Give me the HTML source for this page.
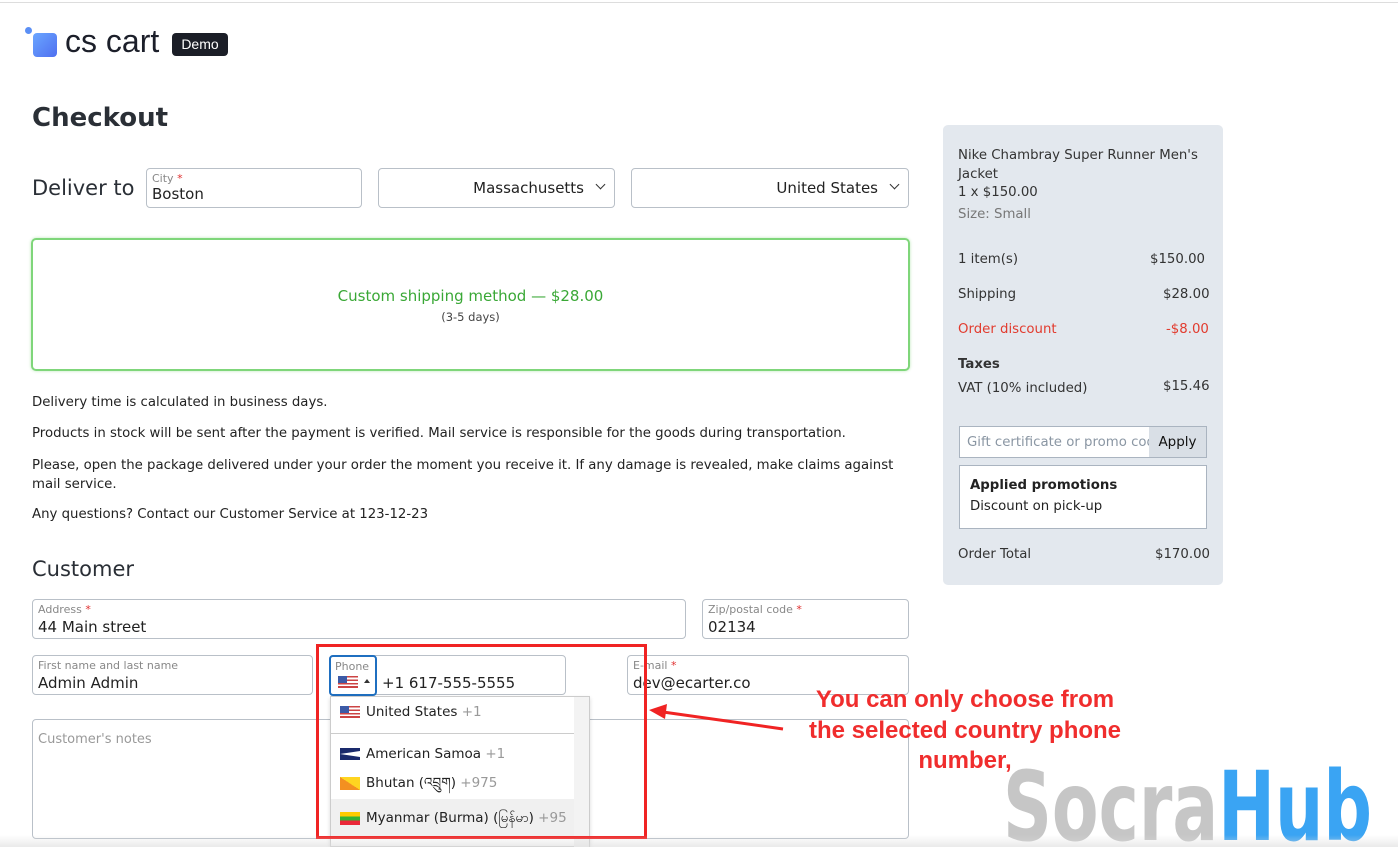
<!DOCTYPE html>
<html><head><meta charset="utf-8"><style>
*{box-sizing:border-box;margin:0;padding:0}
body{width:1398px;height:847px;overflow:hidden;background:#fff;position:relative;font-family:"DejaVu Sans","Liberation Sans",sans-serif;color:#222;font-size:13px}
.a{position:absolute}
.inp{position:absolute;border:1px solid #b9c0c8;border-radius:4px;background:#fff}
.lab{position:absolute;left:5px;top:3px;font-size:11px;color:#888}
.lab b{color:#e03030;font-weight:normal}
.val{position:absolute;left:5px;top:18px;font-size:15px;color:#222}
.sel{position:absolute;right:30px;top:10px;font-size:15px;color:#222}
.chev{position:absolute;right:10px;top:12px;width:7px;height:7px;border-right:1.5px solid #333;border-bottom:1.5px solid #333;transform:rotate(45deg)}
.p{position:absolute;left:32px;font-size:13.3px;color:#222}
.sb{font-size:13.3px;color:#333;position:absolute}
.dd{position:absolute;left:366px;font-size:13.5px;line-height:18px;height:18px;white-space:nowrap}
</style></head><body>
<div class="a" style="left:0;top:2px;width:1398px;height:1px;background:#ddd"></div>
<div class="a" style="left:25px;top:27px;width:7px;height:7px;border-radius:50%;background:#5b8ff5"></div>
<div class="a" style="left:33px;top:33px;width:24px;height:24px;border-radius:4px;background:linear-gradient(135deg,#6aa6ff,#4f6ff0)"></div>
<div class="a" style="left:65px;top:23px;font-family:'Liberation Sans',sans-serif;font-size:32px;color:#1c1f2a">cs cart</div>
<div class="a" style="left:172px;top:33px;width:56px;height:23px;background:#1b1e27;border-radius:4px;color:#fff;font-family:'Liberation Sans',sans-serif;font-size:14px;text-align:center;line-height:23px">Demo</div>

<div class="a" style="left:32px;top:103px;font-size:26px;font-weight:bold;color:#2a2f36">Checkout</div>
<div class="a" style="left:32px;top:176px;font-size:21px;color:#2a2f36">Deliver to</div>
<div class="inp" style="left:146px;top:168px;width:216px;height:40px"><div class="lab">City <b>*</b></div><div class="val" style="top:16px">Boston</div></div>
<div class="inp" style="left:378px;top:168px;width:237px;height:40px"><div class="sel">Massachusetts</div><div class="chev"></div></div>
<div class="inp" style="left:631px;top:168px;width:278px;height:40px"><div class="sel">United States</div><div class="chev"></div></div>

<div class="a" style="left:31px;top:238px;width:879px;height:133px;border:2px solid #7fd67a;border-radius:5px;box-shadow:0 0 3px #bfe9bc"></div>
<div class="a" style="left:31px;top:287px;width:879px;text-align:center;color:#3aa836;font-size:15px">Custom shipping method — $28.00</div>
<div class="a" style="left:31px;top:310px;width:879px;text-align:center;color:#444;font-size:11.5px">(3-5 days)</div>

<div class="p" style="top:395px">Delivery time is calculated in business days.</div>
<div class="p" style="top:426px">Products in stock will be sent after the payment is verified. Mail service is responsible for the goods during transportation.</div>
<div class="p" style="top:456px;width:880px;line-height:19px">Please, open the package delivered under your order the moment you receive it. If any damage is revealed, make claims against mail service.</div>
<div class="p" style="top:507px">Any questions? Contact our Customer Service at 123-12-23</div>

<div class="a" style="left:32px;top:557px;font-size:21px;color:#2a2f36">Customer</div>
<div class="inp" style="left:32px;top:599px;width:654px;height:40px"><div class="lab">Address <b>*</b></div><div class="val">44 Main street</div></div>
<div class="inp" style="left:702px;top:599px;width:207px;height:40px"><div class="lab">Zip/postal code <b>*</b></div><div class="val">02134</div></div>
<div class="inp" style="left:32px;top:655px;width:281px;height:40px"><div class="lab">First name and last name</div><div class="val">Admin Admin</div></div>
<div class="inp" style="left:329px;top:655px;width:237px;height:40px"><div class="lab">Phone</div><div class="val" style="left:52px">+1 617-555-5555</div></div>
<div class="a" style="left:329px;top:655px;width:48px;height:41px;border:2px solid #1f6fc0;border-radius:4px"></div>
<div class="a" style="left:335px;top:660px;font-size:11px;color:#888;background:#fff">Phone</div>
<div class="a" style="left:338px;top:676px;width:20px;height:12px;background:repeating-linear-gradient(#c44 0 1.7px,#fff 1.7px 3.4px)"><div style="width:9px;height:7px;background:#3c5aa6"></div></div>
<div class="a" style="left:364px;top:679px;border-left:3px solid transparent;border-right:3px solid transparent;border-bottom:4px solid #333"></div>
<div class="inp" style="left:627px;top:655px;width:282px;height:40px"><div class="lab">E-mail <b>*</b></div><div class="val">dev@ecarter.co</div></div>
<div class="inp" style="left:32px;top:719px;width:877px;height:120px"><div class="lab" style="top:12px;font-size:13px;color:#999">Customer's notes</div></div>

<div class="a" style="left:330px;top:696px;width:260px;height:151px;background:#fff;border:1px solid #ccc;box-shadow:0 2px 4px rgba(0,0,0,.15)"></div>
<div class="a" style="left:574px;top:697px;width:15px;height:150px;background:#f3f3f3"></div>
<div class="a" style="left:331px;top:733px;width:243px;height:1px;background:#ccc"></div>
<div class="a" style="left:331px;top:799px;width:243px;height:40px;background:#f0f0f0"></div>
<div class="a" style="left:340px;top:706px;width:20px;height:12px;background:repeating-linear-gradient(#c44 0 1.7px,#fff 1.7px 3.4px)"><div style="width:9px;height:7px;background:#3c5aa6"></div></div>
<div class="dd" style="top:703px">United States <span style="color:#999">+1</span></div>
<div class="a" style="left:340px;top:748px;width:20px;height:12px;background:#1a2a6c"><div style="margin-top:3px;height:6px;background:#fff;clip-path:polygon(0 50%,100% 0,100% 100%)"></div></div>
<div class="dd" style="top:745px">American Samoa <span style="color:#999">+1</span></div>
<div class="a" style="left:340px;top:777px;width:20px;height:13px;background:linear-gradient(to top right,#f39021 50%,#ffd520 50%)"></div>
<div class="dd" style="top:774px;overflow:visible">Bhutan (འབྲུག) <span style="color:#999">+975</span></div>
<div class="a" style="left:340px;top:812px;width:20px;height:13px;background:linear-gradient(#fecb00 33%,#34b233 33% 66%,#ea2839 66%)"></div>
<div class="dd" style="top:809px">Myanmar (Burma) (မြန်မာ) <span style="color:#999">+95</span></div>

<div class="a" style="left:316px;top:644px;width:331px;height:195px;border:3px solid #f02323"></div>
<svg class="a" style="left:645px;top:700px" width="140" height="35"><line x1="138" y1="29" x2="18" y2="12" stroke="#f02323" stroke-width="3"/><polygon points="4,10 22,4 20,19" fill="#f02323"/></svg>
<div class="a" style="left:765px;top:685px;width:400px;text-align:center;font-family:'Liberation Sans',sans-serif;font-weight:bold;font-size:24px;line-height:30.5px;color:#f02d2d">You can only choose from<br>the selected country phone<br>number,</div>

<div class="a" style="left:943px;top:125px;width:280px;height:460px;background:#e3e8ee;border-radius:5px"></div>
<div class="sb" style="left:958px;top:146px;width:250px;line-height:19px">Nike Chambray Super Runner Men's Jacket</div>
<div class="sb" style="left:958px;top:185px">1 x $150.00</div>
<div class="sb" style="left:958px;top:207px;color:#777">Size: Small</div>
<div class="sb" style="left:958px;top:252px">1 item(s)</div><div class="sb" style="left:1150px;top:252px">$150.00</div>
<div class="sb" style="left:958px;top:287px">Shipping</div><div class="sb" style="left:1163px;top:287px">$28.00</div>
<div class="sb" style="left:958px;top:322px;color:#e23b2e">Order discount</div><div class="sb" style="left:1166px;top:322px;color:#e23b2e">-$8.00</div>
<div class="sb" style="left:958px;top:357px;font-weight:bold">Taxes</div>
<div class="sb" style="left:958px;top:381px">VAT (10% included)</div><div class="sb" style="left:1163px;top:379px">$15.46</div>
<div class="a" style="left:959px;top:426px;width:248px;height:32px;background:#fff;border:1px solid #aab4c0"></div>
<div class="a" style="left:967px;top:435px;width:182px;overflow:hidden;white-space:nowrap;font-size:13.3px;color:#8a96a3">Gift certificate or promo code</div>
<div class="a" style="left:1149px;top:427px;width:57px;height:30px;background:#d9dfe6;font-size:13.5px;text-align:center;line-height:31px;color:#111">Apply</div>
<div class="a" style="left:959px;top:465px;width:248px;height:64px;background:#fff;border:1px solid #aab4c0"></div>
<div class="sb" style="left:970px;top:478px;font-weight:bold;color:#222">Applied promotions</div>
<div class="sb" style="left:970px;top:499px;color:#222">Discount on pick-up</div>
<div class="sb" style="left:958px;top:547px">Order Total</div><div class="sb" style="left:1155px;top:547px">$170.00</div>

<svg class="a" style="left:0;top:0" width="1398" height="847"><text x="1003" y="840" textLength="369" lengthAdjust="spacingAndGlyphs" font-family="DejaVu Sans, sans-serif" font-weight="bold" font-size="96"><tspan fill="#c6c6c6">Socra</tspan><tspan fill="#3aa4f3">Hub</tspan></text></svg>
<div class="a" style="left:0;top:835px;width:1398px;height:12px;background:linear-gradient(rgba(255,255,255,0),rgba(220,220,220,.6))"></div>
</body></html>
